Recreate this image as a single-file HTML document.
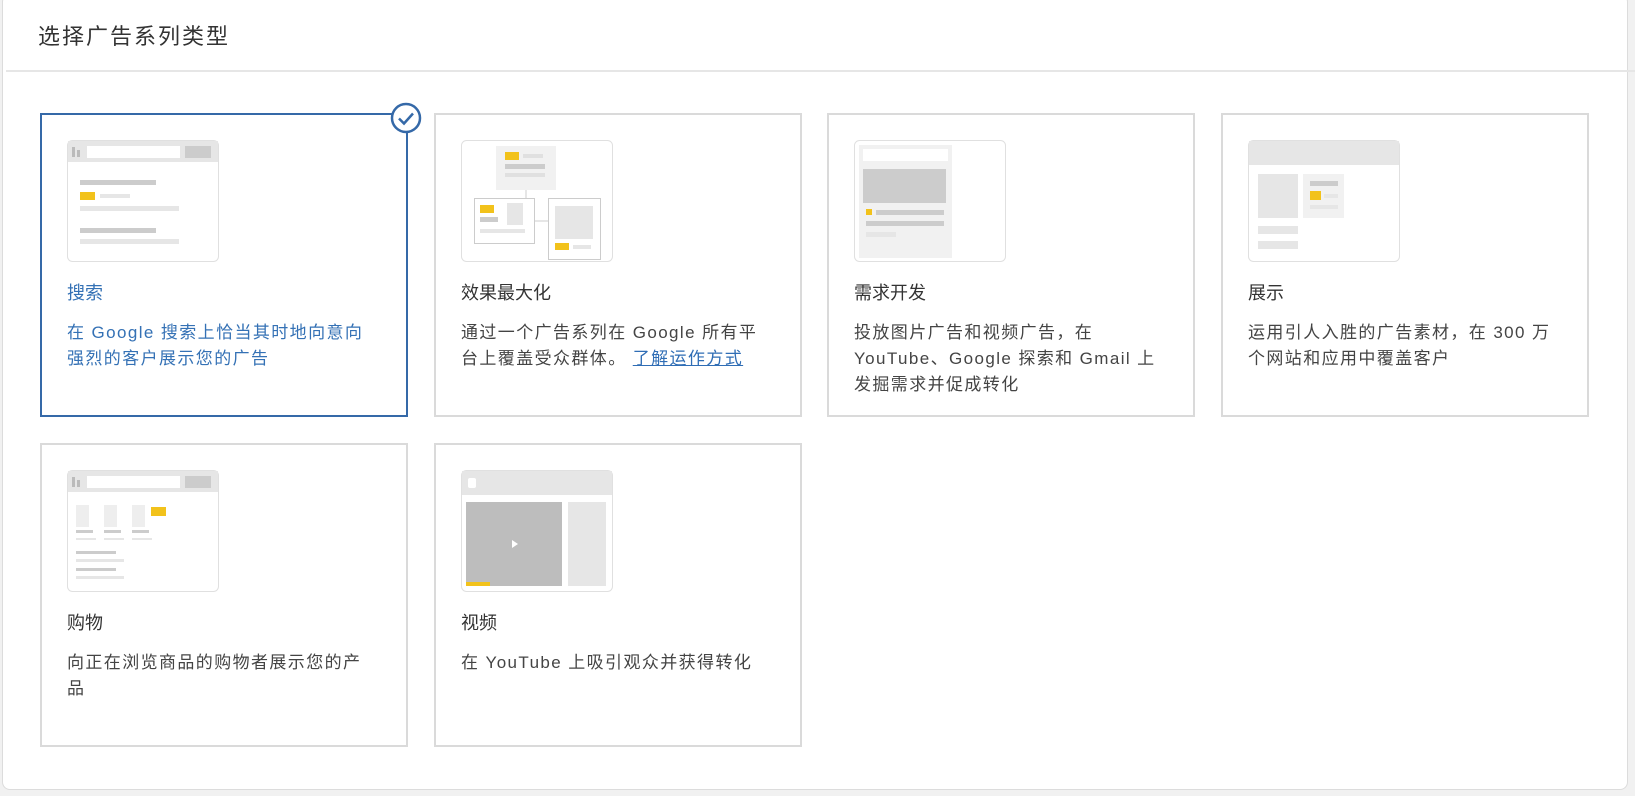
<!DOCTYPE html>
<html><head><meta charset="utf-8"><style>
*{margin:0;padding:0;box-sizing:border-box}
body{width:1635px;height:796px;background:#f1f1f1;font-family:"Liberation Sans","Noto Sans CJK SC",sans-serif;position:relative;overflow:hidden}
.panel{position:absolute;left:2px;top:-6px;width:1626px;height:796px;background:#fff;border:1px solid #dcdcdc;border-radius:8px}
.title{position:absolute;left:38px;top:19px;font-size:22px;letter-spacing:2px;color:#333}
.div{position:absolute;left:6px;right:0;top:70px;height:2px;background:#e6e6e6}
.card{position:absolute;width:368px;height:304px;border:2px solid #dadada;background:#fff}
.card.sel{border-color:#3569a8}
.ill{position:absolute;left:25px;top:25px}
.h{position:absolute;left:25px;top:164px;font-size:18px;color:#333}
.d{position:absolute;left:25px;top:205px;white-space:nowrap;font-size:17px;letter-spacing:1.4px;line-height:26px;color:#444}
.sel .h,.sel .d{color:#3471b5}
a{color:#2f6db5;text-decoration:underline}
.chk{position:absolute;left:390px;top:102px}
</style></head><body>
<div class="panel"></div>
<div class="title">选择广告系列类型</div>
<div class="div"></div>

<div class="card sel" style="left:40px;top:113px">
<svg class="ill" width="152" height="122"><rect x="0.5" y="0.5" width="151" height="121" rx="5" fill="#fff" stroke="#e0e0e0"/><rect x="1" y="1" width="150" height="21" fill="#e6e6e6"/><rect x="5" y="7" width="3" height="10" fill="#bbb"/><rect x="10" y="10" width="3" height="7" fill="#bbb"/><rect x="20" y="6" width="93" height="12" fill="#fff"/><rect x="118" y="6" width="26" height="12" fill="#ccc"/><rect x="13" y="40" width="76" height="5" fill="#ccc"/><rect x="13" y="52" width="15" height="8" fill="#f2c21b"/><rect x="33" y="54" width="30" height="4" fill="#e6e6e6"/><rect x="13" y="66" width="99" height="5" fill="#e6e6e6"/><rect x="13" y="88" width="76" height="5" fill="#ccc"/><rect x="13" y="99" width="99" height="5" fill="#e6e6e6"/></svg>
<div class="h">搜索</div>
<div class="d">在 Google 搜索上恰当其时地向意向<br>强烈的客户展示您的广告</div>
</div>
<svg class="chk" width="32" height="32"><circle cx="16" cy="16" r="14" fill="#fff" stroke="#3569a8" stroke-width="2.5"/><path d="M9 16.5l5 5 9-10" fill="none" stroke="#3569a8" stroke-width="2.5"/></svg>

<div class="card" style="left:434px;top:113px">
<svg class="ill" width="152" height="122"><rect x="0.5" y="0.5" width="151" height="121" rx="5" fill="#fff" stroke="#e0e0e0"/><rect x="35" y="6" width="60" height="44" fill="#f1f1f1"/><rect x="44" y="12" width="14" height="8" fill="#f2c21b"/><rect x="62" y="14" width="20" height="4" fill="#e0e0e0"/><rect x="44" y="24" width="40" height="5" fill="#ccc"/><rect x="44" y="33" width="40" height="4" fill="#e0e0e0"/><line x1="65" y1="50" x2="65" y2="58" stroke="#ccc"/><rect x="13.5" y="58.5" width="60" height="45" fill="#fff" stroke="#ccc"/><rect x="19" y="65" width="14" height="8" fill="#f2c21b"/><rect x="46" y="63" width="16" height="22" fill="#e6e6e6"/><rect x="19" y="77" width="18" height="5" fill="#ccc"/><rect x="19" y="89" width="45" height="4" fill="#e6e6e6"/><line x1="74" y1="81" x2="87" y2="81" stroke="#ccc"/><rect x="87.5" y="58.5" width="52" height="61" fill="#fff" stroke="#ccc"/><rect x="94" y="66" width="38" height="33" fill="#e6e6e6"/><rect x="94" y="103" width="14" height="7" fill="#f2c21b"/><rect x="112" y="105" width="18" height="4" fill="#e6e6e6"/></svg>
<div class="h">效果最大化</div>
<div class="d">通过一个广告系列在 Google 所有平<br>台上覆盖受众群体。 <a>了解运作方式</a></div>
</div>

<div class="card" style="left:827px;top:113px">
<svg class="ill" width="152" height="122"><rect x="0.5" y="0.5" width="151" height="121" rx="5" fill="#fff" stroke="#e0e0e0"/><rect x="5" y="5" width="93" height="113" fill="#f1f1f1"/><rect x="9" y="9" width="85" height="12" fill="#fff"/><rect x="9" y="29" width="83" height="34" fill="#ccc"/><rect x="12" y="69" width="6" height="6" fill="#f2c21b"/><rect x="22" y="70" width="68" height="5" fill="#ccc"/><rect x="12" y="81" width="78" height="5" fill="#ccc"/><rect x="12" y="92" width="30" height="5" fill="#e6e6e6"/></svg>
<div class="h">需求开发</div>
<div class="d">投放图片广告和视频广告，在<br>YouTube、Google 探索和 Gmail 上<br>发掘需求并促成转化</div>
</div>

<div class="card" style="left:1221px;top:113px">
<svg class="ill" width="152" height="122"><rect x="0.5" y="0.5" width="151" height="121" rx="5" fill="#fff" stroke="#e0e0e0"/><rect x="1" y="1" width="150" height="24" fill="#e6e6e6"/><rect x="10" y="34" width="40" height="44" fill="#e6e6e6"/><rect x="55" y="34" width="41" height="44" fill="#f1f1f1"/><rect x="62" y="41" width="28" height="5" fill="#ccc"/><rect x="62" y="51" width="11" height="9" fill="#f2c21b"/><rect x="76" y="54" width="14" height="4" fill="#e6e6e6"/><rect x="62" y="65" width="28" height="4" fill="#e6e6e6"/><rect x="10" y="86" width="40" height="8" fill="#e6e6e6"/><rect x="10" y="101" width="40" height="8" fill="#e6e6e6"/></svg>
<div class="h">展示</div>
<div class="d">运用引人入胜的广告素材，在 300 万<br>个网站和应用中覆盖客户</div>
</div>

<div class="card" style="left:40px;top:443px">
<svg class="ill" width="152" height="122"><rect x="0.5" y="0.5" width="151" height="121" rx="5" fill="#fff" stroke="#e0e0e0"/><rect x="1" y="1" width="150" height="21" fill="#e6e6e6"/><rect x="5" y="7" width="3" height="10" fill="#bbb"/><rect x="10" y="10" width="3" height="7" fill="#bbb"/><rect x="20" y="6" width="93" height="12" fill="#fff"/><rect x="118" y="6" width="26" height="12" fill="#ccc"/><rect x="9" y="35" width="13" height="22" fill="#eee"/><rect x="37" y="35" width="13" height="22" fill="#eee"/><rect x="65" y="35" width="13" height="22" fill="#eee"/><rect x="84" y="37" width="15" height="9" fill="#f2c21b"/><rect x="9" y="60" width="17" height="3" fill="#ccc"/><rect x="37" y="60" width="17" height="3" fill="#ccc"/><rect x="65" y="60" width="17" height="3" fill="#ccc"/><rect x="9" y="68" width="20" height="2" fill="#e6e6e6"/><rect x="37" y="68" width="20" height="2" fill="#e6e6e6"/><rect x="65" y="68" width="20" height="2" fill="#e6e6e6"/><rect x="9" y="81" width="40" height="3" fill="#ccc"/><rect x="9" y="89" width="48" height="3" fill="#e6e6e6"/><rect x="9" y="98" width="40" height="3" fill="#ccc"/><rect x="9" y="106" width="48" height="3" fill="#e6e6e6"/></svg>
<div class="h">购物</div>
<div class="d">向正在浏览商品的购物者展示您的产<br>品</div>
</div>

<div class="card" style="left:434px;top:443px">
<svg class="ill" width="152" height="122"><rect x="0.5" y="0.5" width="151" height="121" rx="5" fill="#fff" stroke="#e0e0e0"/><rect x="1" y="1" width="150" height="24" fill="#e6e6e6"/><rect x="7" y="8" width="8" height="10" rx="2" fill="#fff"/><rect x="5" y="32" width="96" height="84" fill="#bdbdbd"/><rect x="107" y="32" width="38" height="84" fill="#e6e6e6"/><path d="M51 70l6 4-6 4z" fill="#fff"/><rect x="5" y="112" width="24" height="4" fill="#f2c21b"/></svg>
<div class="h">视频</div>
<div class="d">在 YouTube 上吸引观众并获得转化</div>
</div>
</body></html>
